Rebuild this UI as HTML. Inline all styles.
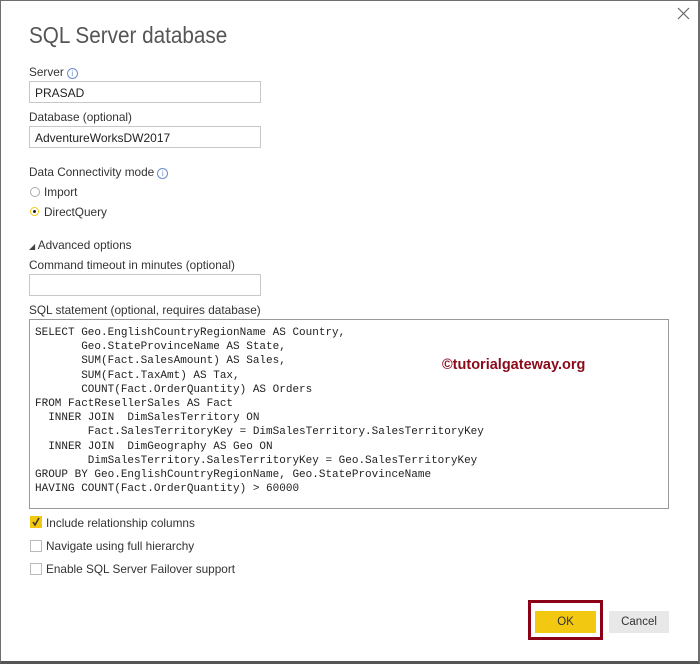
<!DOCTYPE html>
<html><head><meta charset="utf-8"><style>
body{margin:0;width:700px;height:664px;background:#fff;font-family:"Liberation Sans",sans-serif;color:#333;position:relative;overflow:hidden}
.frame{position:absolute;left:0;top:0;width:697px;height:660px;border:1px solid #6e6e6e;border-right-width:2px;border-bottom:3px solid #555;box-sizing:content-box}
.a{position:absolute;white-space:nowrap}
.lbl{font-size:11.8px;color:#333}
.inp{position:absolute;border:1px solid #c8c8c8;box-sizing:border-box;font-size:12px;color:#222;padding:4px 0 0 5px}
.info{display:inline-block;width:9px;height:9px;border:1px solid #6b8fc9;border-radius:50%;font-size:8px;line-height:9px;text-align:center;color:#6b8fc9;vertical-align:0px;margin-left:3px}
.cb{position:absolute;width:10px;height:10px;border:1px solid #bbb;left:30px}
pre{margin:0;font-family:"Liberation Mono",monospace;font-size:11px;line-height:14.2px;color:#222}
</style></head><body>
<div class="frame"></div>
<svg class="a" style="left:677px;top:7px" width="13" height="13"><path d="M1 1 L12 12 M12 1 L1 12" stroke="#666" stroke-width="1.2"/></svg>
<div class="a" style="left:29px;top:22px;font-size:23px;color:#555;transform:scaleX(0.9);transform-origin:0 0">SQL Server database</div>
<div class="a lbl" style="left:29px;top:65px">Server<span class="info">i</span></div>
<div class="inp" style="left:29px;top:81px;width:232px;height:22px">PRASAD</div>
<div class="a lbl" style="left:29px;top:110px">Database (optional)</div>
<div class="inp" style="left:29px;top:126px;width:232px;height:22px">AdventureWorksDW2017</div>
<div class="a lbl" style="left:29px;top:165px">Data Connectivity mode<span class="info">i</span></div>
<div class="a" style="left:30px;top:187px;width:8px;height:8px;border:1px solid #aaa;border-radius:50%"></div>
<div class="a lbl" style="left:44px;top:185px">Import</div>
<div class="a" style="left:30px;top:207px;width:7px;height:7px;border:1.5px solid #f2c811;border-radius:50%"><div style="position:absolute;left:2px;top:2px;width:3px;height:3px;background:#222;border-radius:50%"></div></div>
<div class="a lbl" style="left:44px;top:205px">DirectQuery</div>
<div class="a lbl" style="left:29px;top:238px"><span style="font-size:8px;color:#444">◢</span> Advanced options</div>
<div class="a lbl" style="left:29px;top:258px">Command timeout in minutes (optional)</div>
<div class="inp" style="left:29px;top:274px;width:232px;height:22px"></div>
<div class="a lbl" style="left:29px;top:303px">SQL statement (optional, requires database)</div>
<div class="inp" style="left:29px;top:319px;width:640px;height:190px;border-color:#999;padding:6px 0 0 5px"><pre>SELECT Geo.EnglishCountryRegionName AS Country,
       Geo.StateProvinceName AS State,
       SUM(Fact.SalesAmount) AS Sales,
       SUM(Fact.TaxAmt) AS Tax,
       COUNT(Fact.OrderQuantity) AS Orders
FROM FactResellerSales AS Fact
  INNER JOIN  DimSalesTerritory ON
        Fact.SalesTerritoryKey = DimSalesTerritory.SalesTerritoryKey
  INNER JOIN  DimGeography AS Geo ON
        DimSalesTerritory.SalesTerritoryKey = Geo.SalesTerritoryKey
GROUP BY Geo.EnglishCountryRegionName, Geo.StateProvinceName
HAVING COUNT(Fact.OrderQuantity) &gt; 60000</pre></div>
<div class="a" style="left:442px;top:357px;font-size:14.5px;font-weight:bold;color:#8b0a1a">©tutorialgateway.org</div>
<div class="cb" style="top:516px;background:#f2c811;border-color:#f2c811"><svg width="10" height="10" style="position:absolute;left:0;top:0"><path d="M2 5 L4 8 L8 1" stroke="#333" stroke-width="1.5" fill="none"/></svg></div>
<div class="a lbl" style="left:46px;top:516px">Include relationship columns</div>
<div class="cb" style="top:540px"></div>
<div class="a lbl" style="left:46px;top:539px">Navigate using full hierarchy</div>
<div class="cb" style="top:563px"></div>
<div class="a lbl" style="left:46px;top:562px">Enable SQL Server Failover support</div>
<div class="a" style="left:528px;top:600px;width:69px;height:34px;border:3px solid #8b0016"></div>
<div class="a" style="left:535px;top:611px;width:61px;height:22px;background:#f2c811;font-size:11.5px;text-align:center;line-height:22px;color:#333">OK</div>
<div class="a" style="left:609px;top:611px;width:60px;height:22px;background:#e8e8e8;font-size:11.5px;text-align:center;line-height:22px;color:#333">Cancel</div>
</body></html>
